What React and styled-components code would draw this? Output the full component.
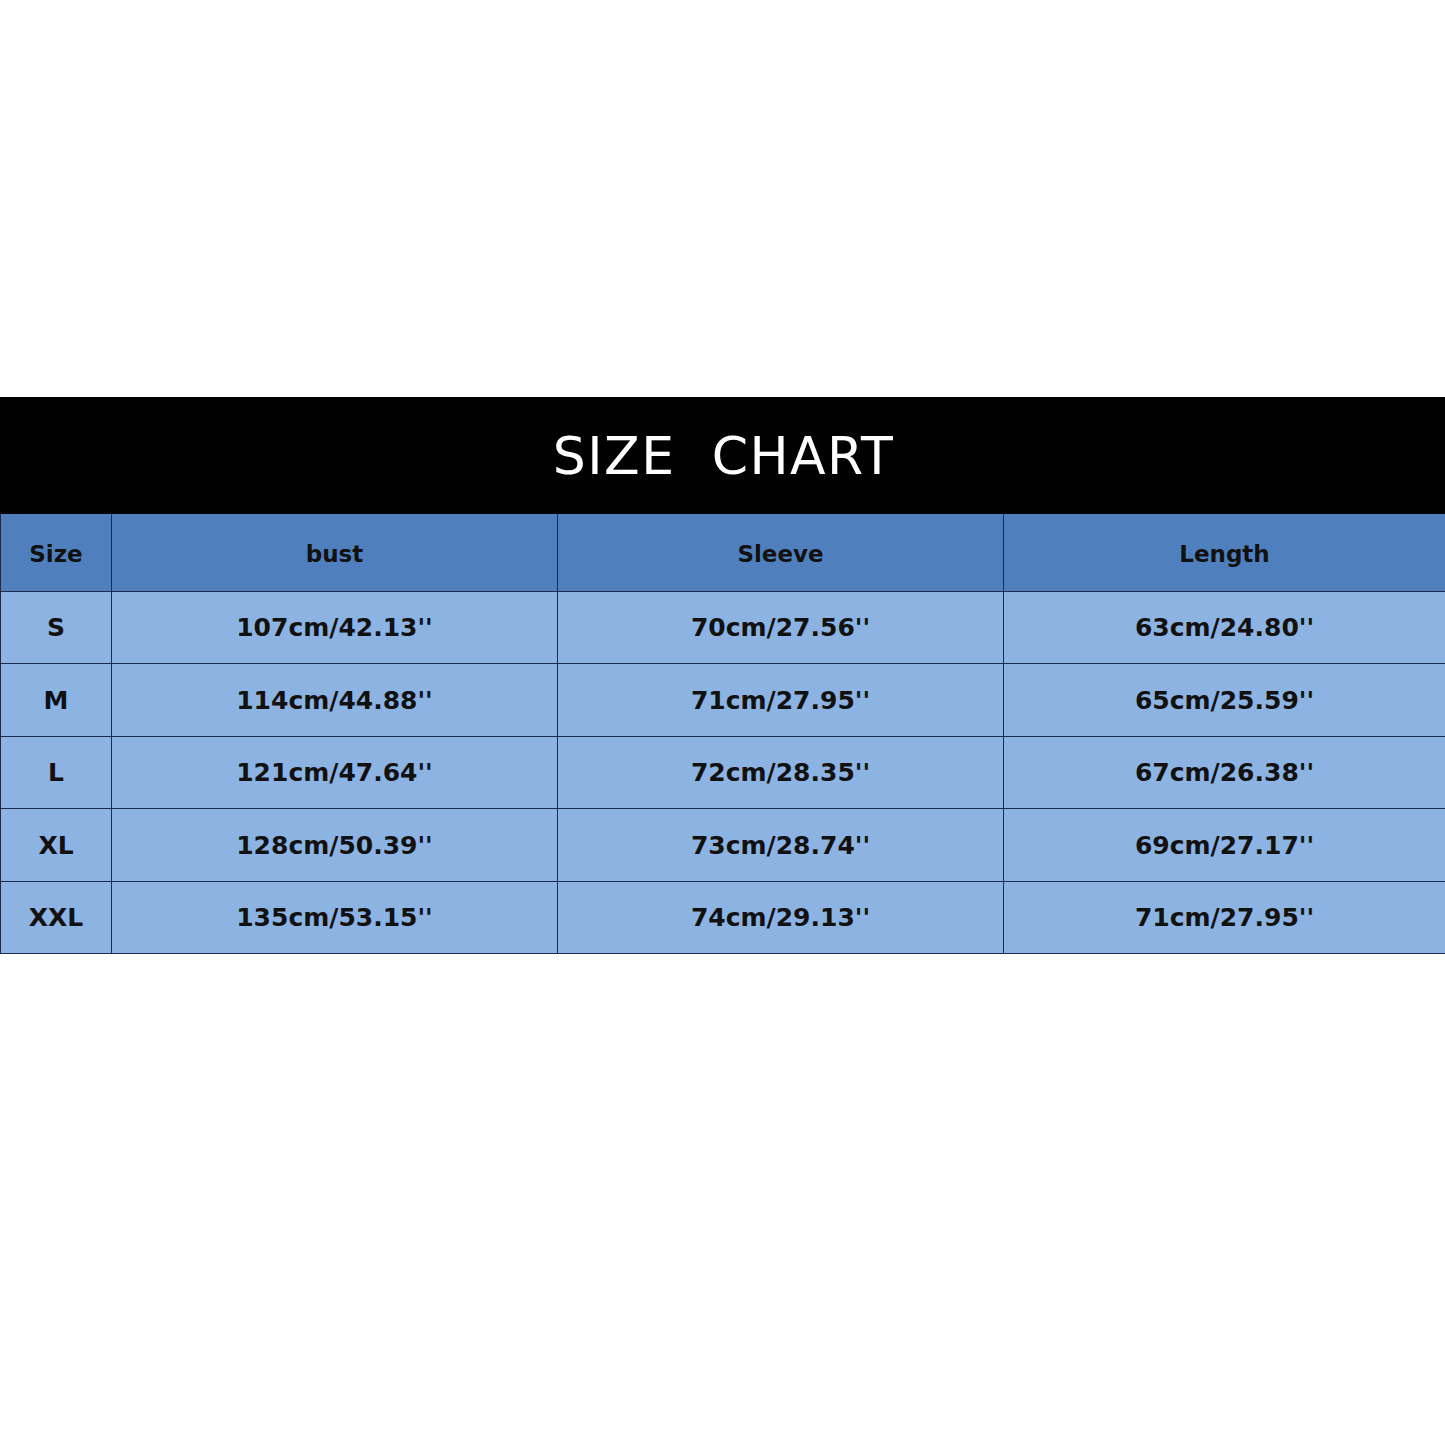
import React from 'react';
import styled, { createGlobalStyle } from 'styled-components';

const GlobalStyle = createGlobalStyle`
  html, body {
    margin: 0;
    padding: 0;
    background: #ffffff;
  }
`;

const font = `"Comic Sans MS", "DejaVu Sans", sans-serif`;

const Page = styled.div`
  width: 1445px;
  height: 1445px;
  padding-top: 397px;
  box-sizing: border-box;
  background: #ffffff;
  font-family: ${font};
`;

const Banner = styled.div`
  height: 117px;
  background: #000000;
  display: flex;
  align-items: center;
  justify-content: center;
`;

const Title = styled.h1`
  margin: 0;
  padding-left: 2px;
  color: #ffffff;
  font-family: ${font};
  font-weight: 400;
  font-size: 52px;
  letter-spacing: 1.5px;
  white-space: pre;
`;

const Grid = styled.div`
  display: grid;
  grid-template-columns: 110px 445px 445px 1fr;
  grid-template-rows: 77px 71px 72px 71px 72px 71px;
  gap: 1px;
  background: #1c2c4c;
  border-left: 1px solid #1c2c4c;
  border-bottom: 1px solid #1c2c4c;
`;

const Cell = styled.div`
  display: flex;
  align-items: center;
  justify-content: center;
  background: ${props => props.head ? '#4f80bd' : '#8db3e2'};
  color: #111111;
  font-family: ${font};
  font-weight: 700;
  font-size: ${props => props.head ? '23px' : '25px'};
  padding-top: ${props => props.head ? '2px' : '0'};
`;

const headers = ['Size', 'bust', 'Sleeve', 'Length'];

const rows = [
  ['S', "107cm/42.13''", "70cm/27.56''", "63cm/24.80''"],
  ['M', "114cm/44.88''", "71cm/27.95''", "65cm/25.59''"],
  ['L', "121cm/47.64''", "72cm/28.35''", "67cm/26.38''"],
  ['XL', "128cm/50.39''", "73cm/28.74''", "69cm/27.17''"],
  ['XXL', "135cm/53.15''", "74cm/29.13''", "71cm/27.95''"],
];

export default function App() {
  return (
    <Page>
      <GlobalStyle />
      <Banner>
        <Title>{'SIZE  CHART'}</Title>
      </Banner>
      <Grid>
        {headers.map(h => <Cell head key={h}>{h}</Cell>)}
        {rows.map(row =>
          row.map((value, i) => <Cell key={row[0] + i}>{value}</Cell>)
        )}
      </Grid>
    </Page>
  );
}
